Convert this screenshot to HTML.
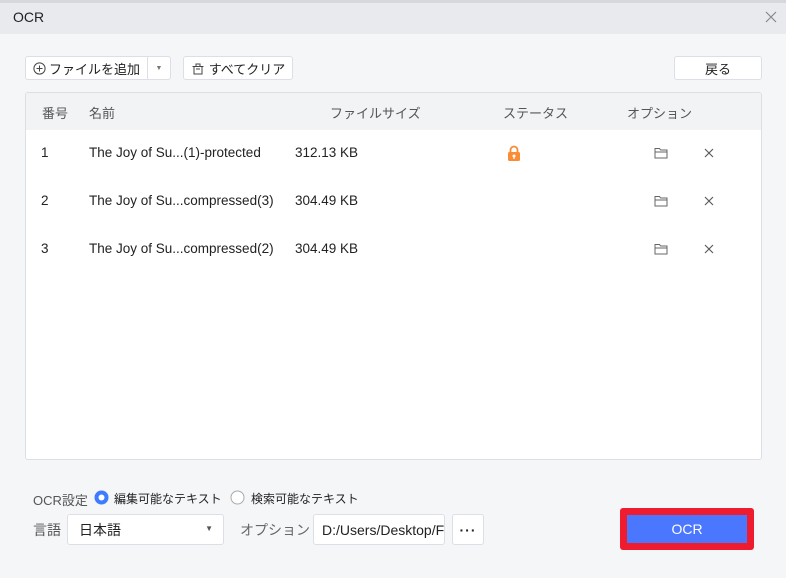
<!DOCTYPE html>
<html><head><meta charset="utf-8"><style>
*{box-sizing:border-box;margin:0;padding:0}
body{width:786px;height:578px;overflow:hidden;background:#f5f6f8;font-family:"Liberation Sans","Noto Sans CJK JP",sans-serif;font-size:13px;color:#222;position:relative}
.abs{position:absolute}
.btn{position:absolute;background:#fff;border:1px solid #dcdfe5;border-radius:3px;display:flex;align-items:center;justify-content:center;font-size:13px;color:#222}
.hdr{color:#555;font-size:13px}
.row{position:absolute;left:0;width:100%;height:48px;font-size:13.5px}
.row span{position:absolute;top:15px}
</style></head><body>
<div class="abs" style="left:0;top:0;width:786px;height:3px;background:#d6d8dc"></div>
<div class="abs" style="left:0;top:3px;width:786px;height:31px;background:#e8eaed"></div>
<div class="abs" style="left:13px;top:9px;font-size:14px">OCR</div>
<svg class="abs" style="left:765px;top:11px" width="12" height="12"><path d="M1 1L11 11M11 1L1 11" stroke="#888" stroke-width="1.2"/></svg>

<div class="btn" style="left:25px;top:56px;width:123px;height:24px;border-radius:3px 0 0 3px">
<svg width="13" height="13" style="margin-right:3px"><circle cx="6.5" cy="6.5" r="5.6" fill="none" stroke="#444"/><path d="M6.5 3.5v6M3.5 6.5h6" stroke="#444"/></svg>ファイルを追加</div>
<div class="btn" style="left:147px;top:56px;width:24px;height:24px;border-radius:0 3px 3px 0;font-size:7px;color:#777">▼</div>
<div class="btn" style="left:183px;top:56px;width:110px;height:24px">
<svg width="14" height="13" style="margin-right:4px"><path d="M1.5 4.5h11M3 4.5v7.5h8V4.5M5 4.5V2h4v2.5M5 7h4" fill="none" stroke="#444"/></svg>すべてクリア</div>
<div class="btn" style="left:674px;top:56px;width:88px;height:24px">戻る</div>

<div class="abs" style="left:25px;top:92px;width:737px;height:368px;background:#fff;border:1px solid #dcdfe5;border-radius:3px;overflow:hidden">
<div class="abs" style="left:0;top:0;width:100%;height:37px;background:#f2f3f5"></div>
<span class="abs hdr" style="left:16px;top:10px">番号</span>
<span class="abs hdr" style="left:63px;top:10px">名前</span>
<span class="abs hdr" style="left:304px;top:10px">ファイルサイズ</span>
<span class="abs hdr" style="left:477px;top:10px">ステータス</span>
<span class="abs hdr" style="left:601px;top:10px">オプション</span>
<div class="row" style="top:37px"><span style="left:15px">1</span><span style="left:63px">The Joy of Su...(1)-protected</span><span style="left:269px">312.13 KB</span>
<svg class="abs" style="left:480px;top:15px" width="16" height="16"><path d="M4.5 7V5a3.5 3.5 0 0 1 7 0v2" fill="none" stroke="#fa8c35" stroke-width="1.8"/><rect x="2" y="7" width="12" height="9" rx="1.5" fill="#fa8c35"/><circle cx="8" cy="11" r="1.5" fill="#fff"/><rect x="7.4" y="11" width="1.2" height="3" fill="#fff"/></svg></div>
<div class="row" style="top:85px"><span style="left:15px">2</span><span style="left:63px">The Joy of Su...compressed(3)</span><span style="left:269px">304.49 KB</span></div>
<div class="row" style="top:133px"><span style="left:15px">3</span><span style="left:63px">The Joy of Su...compressed(2)</span><span style="left:269px">304.49 KB</span></div>
</div>
<svg class="abs" style="left:654px;top:146px" width="14" height="14"><path fill="none" stroke="#666" d="M1 2.5h4.5l1.2 1.5H13V12H1z M1 6h12"/></svg>
<svg class="abs" style="left:654px;top:194px" width="14" height="14"><path fill="none" stroke="#666" d="M1 2.5h4.5l1.2 1.5H13V12H1z M1 6h12"/></svg>
<svg class="abs" style="left:654px;top:242px" width="14" height="14"><path fill="none" stroke="#666" d="M1 2.5h4.5l1.2 1.5H13V12H1z M1 6h12"/></svg>
<svg class="abs" style="left:704px;top:148px" width="10" height="110"><g stroke="#555" stroke-width="1.1"><path d="M1 1l8 8M9 1l-8 8"/><path d="M1 49l8 8M9 49l-8 8"/><path d="M1 97l8 8M9 97l-8 8"/></g></svg>

<span class="abs" style="left:33px;top:490px;color:#555">OCR設定</span>
<svg class="abs" style="left:94px;top:490px" width="15" height="15"><circle cx="7.5" cy="7.5" r="7" fill="#3f7bff"/><circle cx="7.5" cy="7.5" r="3" fill="#fff"/></svg>
<span class="abs" style="left:114px;top:490px;font-size:12px">編集可能なテキスト</span>
<svg class="abs" style="left:230px;top:490px" width="15" height="15"><circle cx="7.5" cy="7.5" r="6.5" fill="#fff" stroke="#aaa"/></svg>
<span class="abs" style="left:251px;top:490px;font-size:12px">検索可能なテキスト</span>

<span class="abs" style="left:33px;top:520px;color:#555;font-size:14px">言語</span>
<div class="btn" style="left:67px;top:514px;width:157px;height:31px;justify-content:flex-start;padding-left:11px;font-size:14px">日本語<span class="abs" style="right:10px;top:9px;font-size:8px;color:#555">▼</span></div>
<span class="abs" style="left:240px;top:520px;color:#666;font-size:14px">オプション</span>
<div class="btn" style="left:313px;top:514px;width:132px;height:31px;justify-content:flex-start;padding-left:8px;font-size:14px;overflow:hidden;white-space:nowrap">D:/Users/Desktop/F</div>
<div class="btn" style="left:452px;top:514px;width:32px;height:31px;font-size:14px;font-weight:bold;letter-spacing:1px">···</div>

<div class="abs" style="left:620px;top:508px;width:134px;height:42px;background:#ee1c2e;border-radius:3px"></div>
<div class="abs" style="left:627px;top:515px;width:120px;height:28px;background:#4b77fe;color:#fff;font-size:14px;display:flex;align-items:center;justify-content:center">OCR</div>
</body></html>
